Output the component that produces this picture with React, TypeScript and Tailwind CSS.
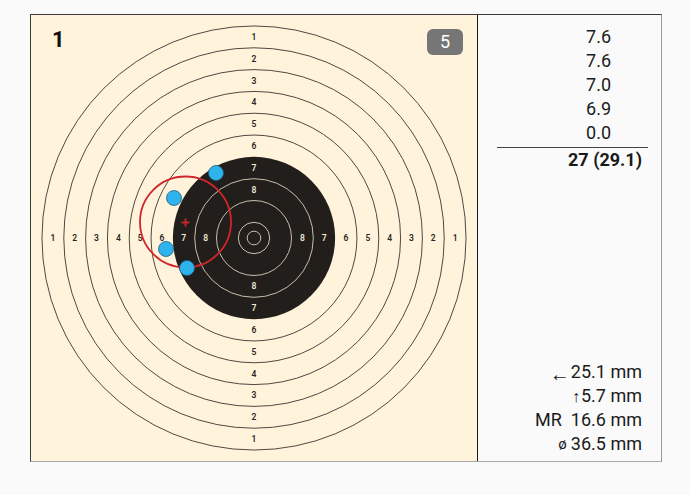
import React from 'react';

// scale of the air pistol target: px per mm
const SCALE = 2.727;
const C = 223;

const ringRadius = (n: number) => ((11.5 + 16 * (10 - n)) / 2) * SCALE;

const shots = [
  { x: 185, y: 158 },
  { x: 143, y: 183 },
  { x: 135, y: 234 },
  { x: 156, y: 253 },
];

const scores = ['7.6', '7.6', '7.0', '6.9', '0.0'];

const Target: React.FC = () => {
  const outer = [1, 2, 3, 4, 5, 6];
  const inner = [8, 9, 10];
  const labels: { n: number; d: number }[] = [];
  for (let n = 1; n <= 8; n++) {
    labels.push({ n, d: (ringRadius(n) + ringRadius(n + 1)) / 2 });
  }

  return (
    <svg width={446} height={446} viewBox="0 0 446 446" className="block">
      {outer.map((n) => (
        <circle key={n} cx={C} cy={C} r={ringRadius(n)} fill="none" stroke="#3a3530" strokeWidth={0.9} />
      ))}
      <circle cx={C} cy={C} r={ringRadius(7)} fill="#221e1b" />
      {inner.map((n) => (
        <circle key={n} cx={C} cy={C} r={ringRadius(n)} fill="none" stroke="#d9cfbb" strokeWidth={0.9} />
      ))}
      <circle cx={C} cy={C} r={2.5 * SCALE} fill="none" stroke="#d9cfbb" strokeWidth={0.9} />

      {labels.map(({ n, d }) => {
        const color = n >= 7 ? '#f3e8d2' : '#2b2622';
        const pts = [
          [C, C - d],
          [C, C + d],
          [C - d, C],
          [C + d, C],
        ];
        return pts.map(([x, y], i) => (
          <text
            key={`${n}-${i}`}
            x={x}
            y={y}
            fill={color}
            fontSize={8.5}
            fontWeight={600}
            fontFamily="Roboto, sans-serif"
            textAnchor="middle"
            dominantBaseline="central"
          >
            {n}
          </text>
        ));
      })}

      {/* group circle and centre */}
      <circle cx={154.5} cy={207} r={45.5} fill="none" stroke="#d0262b" strokeWidth={1.8} />
      <line x1={150.5} y1={207.5} x2={158.5} y2={207.5} stroke="#d0262b" strokeWidth={1.8} />
      <line x1={154.5} y1={203.5} x2={154.5} y2={211.5} stroke="#d0262b" strokeWidth={1.8} />

      {shots.map((s, i) => (
        <circle key={i} cx={s.x} cy={s.y} r={7.5} fill="#2fb3ec" stroke="#1f5f7a" strokeWidth={0.8} />
      ))}
    </svg>
  );
};

export default function App() {
  return (
    <div
      className="w-[690px] h-[495px] bg-[#fafafa] pt-[14px] pl-[30px]"
      style={{ fontFamily: 'Roboto, "Liberation Sans", sans-serif' }}
    >
      <div className="flex w-[632px] h-[448px] border-t border-l border-t-[#3c3c3c] border-l-[#3c3c3c] border-r border-b border-r-[#9a9a9a] border-b-[#a8a8a8]">
        <div className="relative w-[447px] h-[446px] bg-[#fff3dc] border-r border-r-[#1a1a1a]">
          <Target />
          <span className="absolute left-[21px] top-[14px] text-[22px] leading-[22px] font-bold text-[#111]">1</span>
          <span className="absolute left-[396px] top-[14px] w-[36px] h-[26px] rounded-[6px] bg-[#767676] text-white text-[18px] leading-[26px] text-center">
            5
          </span>
        </div>

        <div className="flex-1 flex flex-col justify-between bg-[#fafafa] text-[#1a1a1a]">
          <div className="pt-[10px]">
            {scores.map((s, i) => (
              <div key={i} className="text-right pr-[50px] text-[18px] leading-[24px]">
                {s}
              </div>
            ))}
            <div className="ml-[19px] mr-[13px] mt-[2px] border-t border-[#444]" />
            <div className="text-right pr-[19px] text-[18px] leading-[24px] font-bold">27 (29.1)</div>
          </div>

          <div className="pb-[5px] pr-[19px] text-[18px]">
            <div className="flex h-[24px] items-center justify-end leading-none">
              <span className="text-[20px] mr-[1px] mt-[3px]">←</span>
              <span>25.1 mm</span>
            </div>
            <div className="flex h-[24px] items-center justify-end leading-none">
              <span className="text-[16px] mr-[1px] mt-[1px]">↑</span>
              <span>5.7 mm</span>
            </div>
            <div className="flex h-[24px] items-center justify-end leading-none">
              <span className="mr-[9px]">MR</span>
              <span>16.6 mm</span>
            </div>
            <div className="flex h-[24px] items-center justify-end leading-none">
              <span className="text-[15px] mr-[4px] mt-[1px]">ø</span>
              <span>36.5 mm</span>
            </div>
          </div>
        </div>
      </div>
    </div>
  );
}
